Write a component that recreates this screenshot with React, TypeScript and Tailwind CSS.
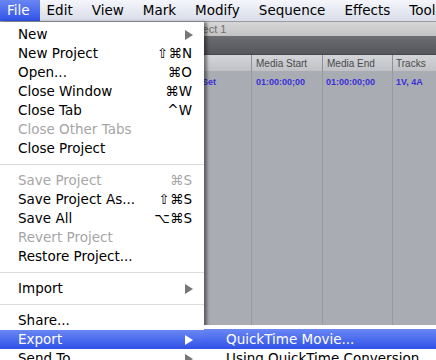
import { ReactNode } from 'react';

type Item =
  | { kind: 'sep' }
  | { kind: 'item'; label: string; shortcut?: string; sub?: boolean; disabled?: boolean; active?: boolean };

const fileMenu: Item[] = [
  { kind: 'item', label: 'New', sub: true },
  { kind: 'item', label: 'New Project', shortcut: '⇧⌘N' },
  { kind: 'item', label: 'Open...', shortcut: '⌘O' },
  { kind: 'item', label: 'Close Window', shortcut: '⌘W' },
  { kind: 'item', label: 'Close Tab', shortcut: '^W' },
  { kind: 'item', label: 'Close Other Tabs', disabled: true },
  { kind: 'item', label: 'Close Project' },
  { kind: 'sep' },
  { kind: 'item', label: 'Save Project', shortcut: '⌘S', disabled: true },
  { kind: 'item', label: 'Save Project As...', shortcut: '⇧⌘S' },
  { kind: 'item', label: 'Save All', shortcut: '⌥⌘S' },
  { kind: 'item', label: 'Revert Project', disabled: true },
  { kind: 'item', label: 'Restore Project...' },
  { kind: 'sep' },
  { kind: 'item', label: 'Import', sub: true },
  { kind: 'sep' },
  { kind: 'item', label: 'Share...' },
  { kind: 'item', label: 'Export', sub: true, active: true },
  { kind: 'item', label: 'Send To', sub: true },
];

const menuBar = ['File', 'Edit', 'View', 'Mark', 'Modify', 'Sequence', 'Effects', 'Tools'];

function Arrow({ white }: { white?: boolean }) {
  return (
    <svg width="8" height="10" viewBox="0 0 8 10" className="shrink-0">
      <path d="M0 0 L8 5 L0 10 Z" fill={white ? '#ffffff' : '#777777'} />
    </svg>
  );
}

function Row({ children, active }: { children: ReactNode; active?: boolean }) {
  return (
    <div
      className={
        'flex h-[19px] items-center pl-[18px] pr-[11px] ' +
        (active ? 'bg-gradient-to-b from-[#6a86f3] to-[#3150e8] text-white' : '')
      }
    >
      {children}
    </div>
  );
}

export default function App() {
  return (
    <div
      className="relative h-[360px] w-[436px] overflow-hidden bg-[#a9acb3] text-[13.5px] text-black"
      style={{ fontFamily: '"DejaVu Sans", "Noto Sans", sans-serif' }}
    >
      {/* Menu bar */}
      <div className="flex h-[22px] items-center bg-gradient-to-b from-[#f4f6fb] to-[#d9dde8] border-b border-[#9a9ca3]">
        {menuBar.map((m, i) => (
          <div
            key={m}
            className={
              'flex h-full items-center px-[7px] ' +
              (i === 0 ? 'bg-gradient-to-b from-[#6a86f3] to-[#3150e8] pr-[10px] text-white' : 'mr-[5px]')
            }
          >
            {m}
          </div>
        ))}
      </div>

      {/* Background window */}
      <div className="flex flex-col font-['Liberation_Sans',sans-serif]">
        <div className="flex h-[14px] items-center bg-gradient-to-b from-[#d6d6d6] to-[#c3c3c3] pl-[183px] text-[11px] text-[#6f6f6f]">
          Project 1
        </div>
        <div className="h-[19px] bg-gradient-to-b from-[#6b6d72] to-[#55575c] border-b border-[#46484c]" />
        <div className="flex h-[16px] items-stretch bg-gradient-to-b from-[#d3d5d9] to-[#bfc1c6] text-[10px] text-[#4a4a4a]">
          <div className="w-[252px] border-r border-[#8e9096]" />
          <div className="flex w-[71px] items-center border-r border-[#8e9096] pl-[4px]">Media Start</div>
          <div className="flex w-[70px] items-center border-r border-[#8e9096] pl-[4px]">Media End</div>
          <div className="flex flex-1 items-center pl-[3px]">Tracks</div>
        </div>
        <div className="flex h-[254px] items-stretch text-[9px] font-bold text-[#3a30d8]">
          <div className="w-[252px] border-r border-[#979aa1] pt-[5px] text-right pr-[35px]">Set</div>
          <div className="w-[71px] border-r border-[#979aa1] pt-[5px] pl-[4px]">01:00:00;00</div>
          <div className="w-[70px] border-r border-[#979aa1] pt-[5px] pl-[3px]">01:00:00;00</div>
          <div className="flex-1 pt-[5px] pl-[3px]">1V, 4A</div>
        </div>
      </div>

      {/* File menu dropdown */}
      <div className="absolute left-0 top-[22px] w-[204px] bg-white pt-[3px] shadow-[3px_0_3px_rgba(0,0,0,0.45)]">
        {fileMenu.map((it, i) =>
          it.kind === 'sep' ? (
            <div key={i} className="flex h-[13px] items-center">
              <div className="h-px w-full bg-[#dcdcdc]" />
            </div>
          ) : (
            <Row key={i} active={it.active}>
              <span className={'flex-1 ' + (it.disabled ? 'text-[#a6a6a6]' : '')}>{it.label}</span>
              {it.shortcut && (
                <span className={'mr-[1px] ' + (it.disabled ? 'text-[#a6a6a6]' : '')}>{it.shortcut}</span>
              )}
              {it.sub && <Arrow white={it.active} />}
            </Row>
          )
        )}
      </div>

      {/* Export submenu */}
      <div className="absolute left-[204px] top-[325px] w-[240px] bg-white pt-[4px]">
        <div className="flex h-[20px] items-center bg-gradient-to-b from-[#6a86f3] to-[#3150e8] pl-[22px] text-white">
          QuickTime Movie...
        </div>
        <div className="flex h-[19px] items-center pl-[22px]">Using QuickTime Conversion</div>
      </div>
    </div>
  );
}
